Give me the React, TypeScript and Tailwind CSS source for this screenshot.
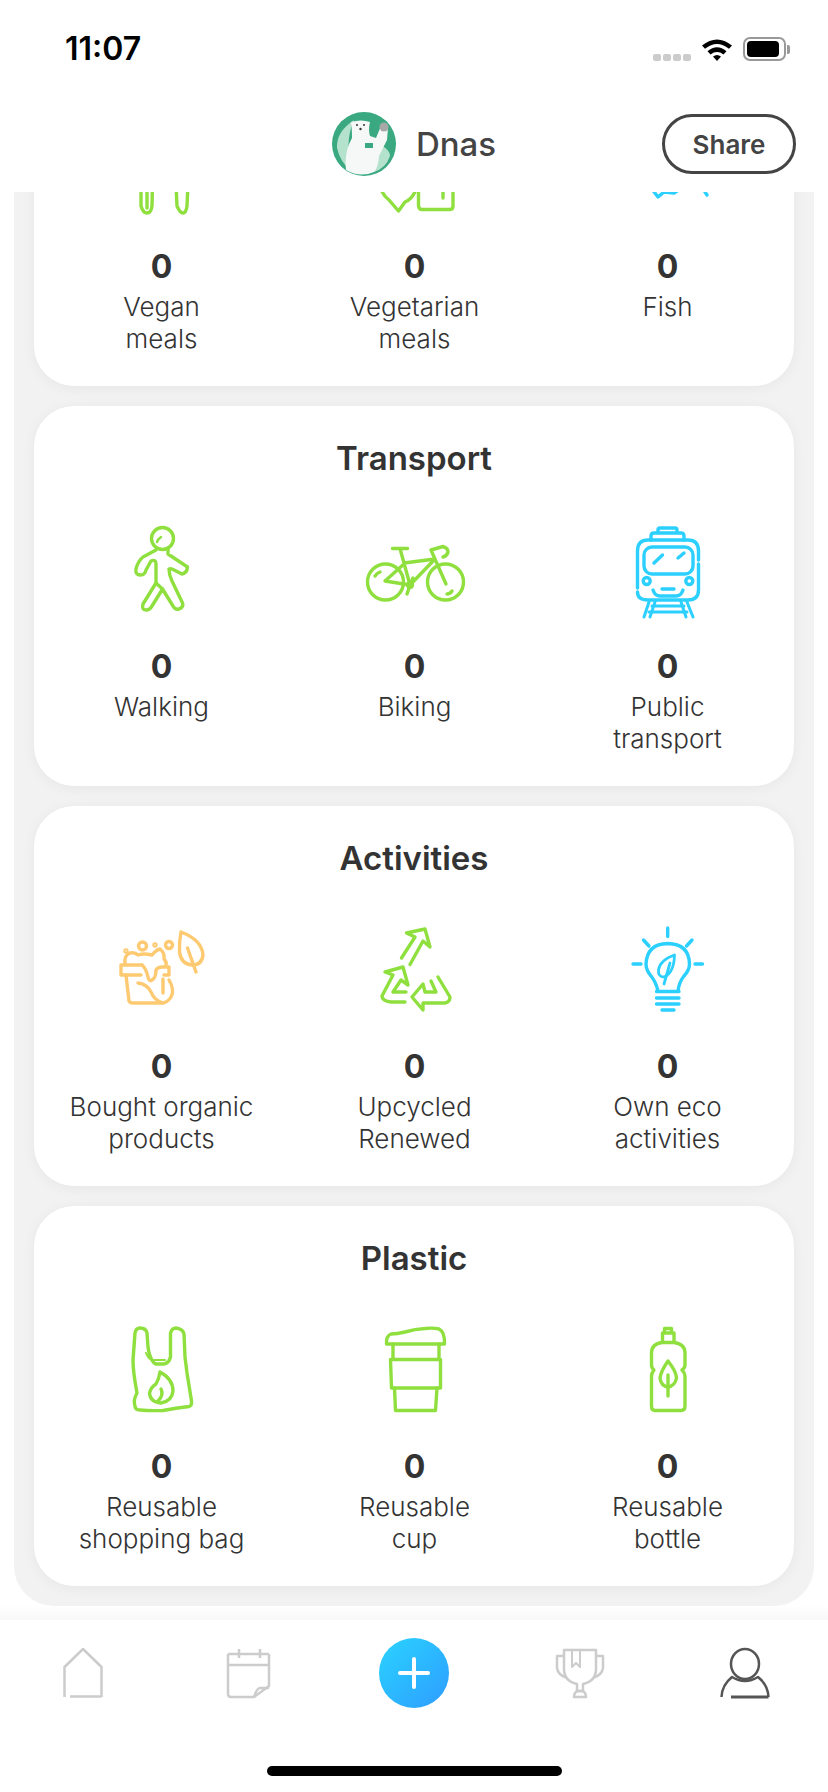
import React from 'react';

const GREEN = '#8fe03f';
const CYAN = '#2bd0ff';
const ORANGE = '#fdca72';

const IconBox: React.FC<{ color: string; children: React.ReactNode }> = ({ color, children }) => (
    <svg width="120" height="100" viewBox="0 0 120 100" fill="none" stroke={color} strokeWidth="3.400" strokeLinecap="round" strokeLinejoin="round">
        {children}
    </svg>
);

const VeganIcon = () => (
    <IconBox color={GREEN}>
        <path d="M39 40V84Q41 91 45 91Q49 91 50 84L51 40M45 60V86" />
        <path d="M73 40L75 84Q78 91 81 91Q84 91 85 84L87 40" />
    </IconBox>
);

const VegetarianIcon = () => (
    <IconBox color={GREEN}>
        <path d="M24 60Q26 72 34 78L43.500 89L50 80Q60 76 63 60" />
        <path d="M63.500 50V84Q64 87.500 67 87.500H95Q98 87.500 98 84V50" />
        <path d="M88 50V76" />
    </IconBox>
);

const FishIcon = () => (
    <IconBox color={CYAN}>
        <path d="M40 62L50 75L56 70L66 71L74 66" />
        <path d="M97 70L99 73" />
    </IconBox>
);

const WalkIcon = () => (
    <IconBox color={GREEN}>
        <circle cx="60.500" cy="16.500" r="11" />
        <path d="M55 20Q56 17 59 15" strokeWidth="2.500" />
        <path d="M54 28L41 35Q36 39 34 47Q33 53 38.500 53Q43 53 44 48L49 39Q54 37 54 42V61L41 82Q39.500 88 44 88Q48 88 50 84L60.500 67L71 84Q73 88 77 87Q82 85 80.500 81L70 59Q67 53 67 47Q69 46 72 48L80 52Q85 51 85.500 45L66 32V27" />
        <path d="M54 61L60.500 67" />
    </IconBox>
);

const BikeIcon = () => (
    <IconBox color={GREEN}>
        <circle cx="30.500" cy="60" r="18" />
        <circle cx="90.500" cy="60" r="18" />
        <path d="M37.500 26.500H52.500M45 26.500L55 63M49 41L80 37M80 37L55 63L30 59L49 42M76 28L91 62M76 28L88 24.500Q93 26 93 30Q92 34 88 35" />
        <path d="M52 72L55 63L58 56M20 54Q22 51 25 50M92 72Q95 72 97 69" />
        <circle cx="55" cy="63" r="2.500" />
    </IconBox>
);

const TrainIcon = () => (
    <IconBox color={CYAN}>
        <path d="M50 11V8Q50 6 52 6H67Q69 6 69 8V11M43 18V14Q43 11 46 11H73Q76 11 76 14V18" />
        <path d="M90.500 38V29Q90.500 18 80 18H40Q29.500 18 29.500 29V66" />
        <path d="M90.500 42V68Q90.500 78 80 78H40Q29.500 78 29.500 70" />
        <rect x="36" y="25" width="49" height="27" rx="8" />
        <circle cx="38.700" cy="59" r="3.500" />
        <circle cx="81.300" cy="59" r="3.500" />
        <path d="M45 68Q47 74 52 74H68Q73 74 75 68M54 67H66M46 41L54.500 33M70 36L76 31" />
        <path d="M41 80L36 95M47 80L42 95M73 80L78 95M79 80L85 95M44 84H76M41 90H79" strokeWidth="3" />
    </IconBox>
);

const BucketIcon = () => (
    <IconBox color={ORANGE}>
        <path d="M79 10Q100 18 101 33Q100 43 90 43Q79 42 77.500 30Q77 20 79 10Z" />
        <path d="M85.500 26L94 50" />
        <circle cx="40.500" cy="24" r="4" />
        <circle cx="67" cy="23" r="3.500" />
        <circle cx="53" cy="23" r="1" />
        <circle cx="24" cy="29" r="1" />
        <path d="M23 42Q22 33 28 31Q33 30 36 33Q42 31 50 33Q54 28 58 27Q63 31 62 37Q65 40 64 43" />
        <path d="M40 43H19V53H39" />
        <path d="M40 43Q44 46 46 55Q47 60 50 58Q54 56 54 48Q56 45 60 45H67V53H62" />
        <path d="M24 53L27 79Q28 81 31 81H61" />
        <path d="M36 61Q45 62 49 70Q52 78 61 81M67 58Q73 68 69 75Q66 80 61 81M61 57V71" />
    </IconBox>
);

const RecycleIcon = () => (
    <IconBox color={GREEN}>
        <path d="M46.500 36L60 15L51.500 11L70 7L75 25L68 19L55 42.500" />
        <path d="M50 80H36Q27 79 27 74L38 53L30 50L48 45L53 63L46 58L38 70H51" />
        <path d="M83 55L95 75Q95 80 90 81H68V88L57 75L68 62L70 70H81L76 59" />
    </IconBox>
);

const BulbIcon = () => (
    <IconBox color={CYAN}>
        <path d="M59.700 6V14.500M35.500 18L41 24M84 18L78.500 24M25 42H33M87 42H94.500" />
        <path d="M50 69Q48 60 43 54Q38 48 38 42Q39 22 59.700 21.500Q81 22 81.500 42Q81.500 48 76 54Q71 60 70 69" />
        <path d="M48.500 69.500H71M48.500 76H71M48.500 82H71M54 88H66" />
        <path d="M66.500 33Q52 38 50.500 48Q50 55 56 55Q66 51 66.500 33Z" strokeWidth="2.800" />
        <path d="M62 41L56 62" strokeWidth="2.800" />
    </IconBox>
);

const BagIcon = () => (
    <IconBox color={GREEN}>
        <path d="M33 84Q31 78 35 71Q31 50 31 38L33 11Q34 6 38 6Q44 6 45 11L46 25Q47 33 50 38Q52 42 55 42H62Q67 41 68.500 35V11Q70 6 74 6Q81 7 82 12L83 35L85 51L89.500 79Q90 84 87 84.500Q74 86 61 88.500Q48 89 38 88Q33 88 33 84Z" />
        <path d="M44 31Q48 40 53 38H63" strokeWidth="2" />
        <path d="M58 50Q71 57 71 69Q70 79 59 81Q48 80 47.500 71Q49 65 54 62Q57 57 58 50Z" />
        <path d="M59 67Q62 73 56 79" />
    </IconBox>
);

const CupIcon = () => (
    <IconBox color={GREEN}>
        <path d="M31.500 22H89.500Q90 10 84 7Q78 5.500 70 6.500Q60 7 50 10Q42 12 36 12Q31 14 31.500 22Z" />
        <path d="M38 22V37M84 22V37M35.500 37.500H85.500V66H36.500Z" />
        <path d="M39.500 66L40.500 88.500H80.500L82 66" />
    </IconBox>
);

const BottleIcon = () => (
    <IconBox color={GREEN}>
        <path d="M56.500 11V6.500H63.500V11M54.500 20V11H66V20" />
        <path d="M54 20.500H66Q77 22 77 31V43Q77 46 74 48Q77 51 77 54V84Q77 88.500 73 88.500H47Q43.500 88.500 43.500 84V54Q43.500 51 46 48Q43.500 46 43.500 43V31Q43.500 22 54 20.500Z" />
        <path d="M60 39Q68 49 68.500 56Q67 64 60 65Q53 64 52 56Q53 49 60 39ZM60 53V74" />
    </IconBox>
);

interface Stat {
    icon: React.ReactNode;
    lines: string[];
}

// first section is scrolled under the header, its title never shows
const sections: { id: string; title?: string; stats: Stat[] }[] = [
    {
        id: 'food',
        stats: [
            { icon: <VeganIcon />, lines: ['Vegan', 'meals'] },
            { icon: <VegetarianIcon />, lines: ['Vegetarian', 'meals'] },
            { icon: <FishIcon />, lines: ['Fish'] },
        ],
    },
    {
        id: 'transport',
        title: 'Transport',
        stats: [
            { icon: <WalkIcon />, lines: ['Walking'] },
            { icon: <BikeIcon />, lines: ['Biking'] },
            { icon: <TrainIcon />, lines: ['Public', 'transport'] },
        ],
    },
    {
        id: 'activities',
        title: 'Activities',
        stats: [
            { icon: <BucketIcon />, lines: ['Bought organic', 'products'] },
            { icon: <RecycleIcon />, lines: ['Upcycled', 'Renewed'] },
            { icon: <BulbIcon />, lines: ['Own eco', 'activities'] },
        ],
    },
    {
        id: 'plastic',
        title: 'Plastic',
        stats: [
            { icon: <BagIcon />, lines: ['Reusable', 'shopping bag'] },
            { icon: <CupIcon />, lines: ['Reusable', 'cup'] },
            { icon: <BottleIcon />, lines: ['Reusable', 'bottle'] },
        ],
    },
];

const StatusBar = () => (
    <div className="h-[88px] shrink-0 flex items-start justify-between pl-[65px] pr-[38px] pt-[30px]">
        <span className="text-[32px] leading-[38px] font-semibold text-black">11:07</span>
        <div className="flex items-start pt-[7px]">
            <div className="flex gap-[2px] mt-[17px] mr-[10px]">
                <div className="w-[8px] h-[7px] rounded-[2px] bg-[#cccccc]" />
                <div className="w-[8px] h-[7px] rounded-[2px] bg-[#cccccc]" />
                <div className="w-[8px] h-[7px] rounded-[2px] bg-[#cccccc]" />
                <div className="w-[8px] h-[7px] rounded-[2px] bg-[#cccccc]" />
            </div>
            <svg width="32" height="24" viewBox="0 0 32 24" className="mr-[10px]">
                <path d="M1 8.500Q16 -3.500 31 8.500L28 11.800Q16 2 4 11.800Z" fill="#000" />
                <path d="M6.500 14.200Q16 6.500 25.500 14.200L22.500 17.400Q16 12.500 9.500 17.400Z" fill="#000" />
                <path d="M12 19.500Q16 16.500 20 19.500L16 24Z" fill="#000" />
            </svg>
            <div className="w-[43px] h-[24px] rounded-[7px] border-2 border-[#999999] p-[2px]">
                <div className="w-[32px] h-full rounded-[4px] bg-black" />
            </div>
            <div className="w-[3px] h-[9px] mt-[8px] ml-[1px] rounded-r-[2px] bg-[#999999]" />
        </div>
    </div>
);

const Avatar = () => (
    <svg width="64" height="64" viewBox="0 0 64 64">
        <circle cx="32" cy="32" r="32" fill="#3aa981" />
        <path d="M5 36Q4 20 22 8Q12 30 20 60Q8 50 5 36ZM42 30Q58 36 58 44Q54 56 42 60Z" fill="#b4e2cd" />
        <path d="M14 58Q12 40 20 26Q20 16 19 10Q29 7 38 10Q36 18 38 24L44 26L49 14L56 15L55 28Q50 38 47 44Q46 56 42 60Q28 66 14 58Z" fill="#f6f8f7" />
        <circle cx="52" cy="15" r="4.500" fill="#a8a8a8" />
        <rect x="33" y="31" width="8" height="5" fill="#3aa981" />
        <circle cx="25" cy="13" r="1" fill="#333" />
        <circle cx="32" cy="13" r="1" fill="#333" />
        <circle cx="28.500" cy="17" r="1.200" fill="#333" />
    </svg>
);

const Header = () => (
    <div className="relative h-[104px] shrink-0 flex items-center justify-center pt-[8px] bg-white">
        <div className="flex items-center gap-[20px]">
            <Avatar />
            <span className="text-[33px] leading-[40px] font-medium text-[#444444]">Dnas</span>
        </div>
        <div className="absolute right-[32px] top-[26px] w-[134px] h-[60px] rounded-[30px] border-[3px] border-[#444444] flex items-center justify-center text-[26px] font-semibold text-[#444444]">
            Share
        </div>
    </div>
);

const SectionCard: React.FC<{ title?: string; stats: Stat[] }> = ({ title, stats }) => (
    <div className="h-[380px] shrink-0 bg-white rounded-[40px] shadow-[0_2px_14px_rgba(0,0,0,0.05)] pt-[32px]">
        <h2 className="h-[40px] text-[33px] leading-[40px] font-semibold text-[#333333] text-center">{title}</h2>
        <div className="grid grid-cols-3 mt-[44px] pl-[1px]">
            {stats.map(stat => (
                <div key={stat.lines.join(' ')} className="flex flex-col items-center">
                    {stat.icon}
                    <p className="mt-[25px] text-[32px] leading-[40px] font-bold text-[#333333]">0</p>
                    <div className="mt-[4px] text-[26px] leading-[32px] font-light text-[#333333] text-center">
                        {stat.lines.map(line => (
                            <div key={line}>{line}</div>
                        ))}
                    </div>
                </div>
            ))}
        </div>
    </div>
);

const TabIcon: React.FC<{ color?: string; children: React.ReactNode }> = ({ color = '#cccccc', children }) => (
    <svg width="60" height="52" viewBox="0 0 60 52" fill="none" stroke={color} strokeWidth="2.500" strokeLinejoin="round">
        {children}
    </svg>
);

const TabBar = () => (
    <div className="h-[172px] shrink-0 bg-white">
        <div className="grid grid-cols-5 pt-[18px] h-[88px] items-center justify-items-center">
            <TabIcon>
                <path d="M11.500 50V20L30 2L48.500 20V50M17 49.500H48.500" />
            </TabIcon>
            <TabIcon>
                <path d="M10 18H51M21 2V11M42 2V11M10 7H51" />
                <path d="M10 7V47Q10 50 13 50H36L51 39V7" />
                <path d="M36 50Q39 41 42 41H51" />
            </TabIcon>
            <div className="w-[70px] h-[70px] rounded-full bg-gradient-to-br from-[#2bd3ff] to-[#2f9cff] flex items-center justify-center">
                <svg width="32" height="32" viewBox="0 0 32 32" stroke="#ffffff" strokeWidth="4" strokeLinecap="round">
                    <path d="M16 2V30M2 16H30" />
                </svg>
            </div>
            <TabIcon>
                <path d="M14 3H46V22Q46 34 33 37V44H27V37Q14 34 14 22Z" />
                <path d="M14 9H7V21Q8 28 17 31M46 9H53V21Q52 28 43 31" />
                <path d="M22 3V20L26 16L30 20V3" strokeWidth="2" />
                <path d="M24 50H36Q36 45 32 44H28Q24 45 24 50Z" />
            </TabIcon>
            <TabIcon color="#555555">
                <ellipse cx="30" cy="17" rx="14" ry="15" strokeWidth="2.500" />
                <path d="M6.500 50Q7 38 17 30Q30 38 43 30Q53 38 53.500 50" strokeWidth="2.500" />
                <path d="M16 50H53.500" strokeWidth="3" />
            </TabIcon>
        </div>
        <div className="w-[295px] h-[10px] mt-[58px] mx-auto rounded-full bg-black" />
    </div>
);

export default function App() {
    return (
        <div className="w-[828px] h-[1792px] flex flex-col overflow-hidden bg-white font-['Inter',sans-serif]">
            <StatusBar />
            <Header />
            <main className="flex-1 min-h-0 overflow-hidden flex flex-col justify-end bg-gradient-to-b from-white from-[99%] to-[#f8f8f8]">
                <div className="shrink-0 mx-[14px] mb-[14px] px-[20px] pb-[20px] flex flex-col gap-[20px] bg-[#f2f2f2] rounded-b-[40px]">
                    {sections.map(section => (
                        <SectionCard key={section.id} title={section.title} stats={section.stats} />
                    ))}
                </div>
            </main>
            <TabBar />
        </div>
    );
}
